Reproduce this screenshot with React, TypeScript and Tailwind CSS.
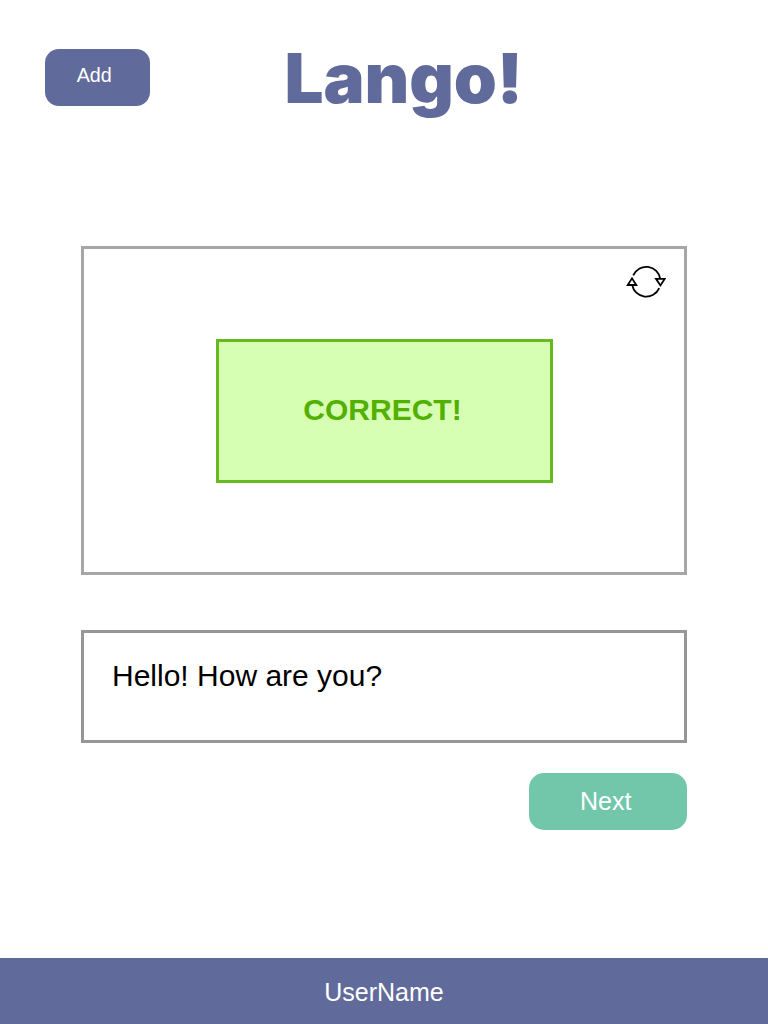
function SwapIcon() {
  return (
    <svg width="40" height="34" viewBox="0 0 40 34" fill="none" stroke="#000" strokeWidth="1.8">
      <path d="M7.2 10.4A14.2 14.2 0 0 1 34.3 14" />
      <path d="M33.2 23.2A14.2 14.2 0 0 1 6.2 19.8" />
      <path d="M30 13.8H38.8L34.4 20.4Z" />
      <path d="M1.7 20H10.3L6 13.3Z" />
    </svg>
  );
}

export default function App() {
  return (
    <div className="flex h-[1024px] w-[768px] flex-col bg-white font-['Liberation_Sans',Arial,sans-serif]">
      <header className="flex h-[246px] items-start pl-[45px] pt-[49px]">
        <button className="h-[57px] w-[104.5px] rounded-[14px] bg-[#616b9b] pb-1 pr-[6px] text-[19.7px] leading-[53px] text-white">
          Add
        </button>
        <h1 className="ml-[135px] -mt-[11px] whitespace-nowrap font-['Inter',sans-serif] text-[69px] font-black leading-[80px] tracking-[-0.1px] text-[#616b9b]">
          Lango!
        </h1>
      </header>

      <main className="flex flex-1 flex-col pl-[81px] pr-[81px]">
        <section className="flex h-[329px] w-[606px] flex-col border-[3px] border-[#a6a6a6]">
          <button className="ml-auto mr-[18px] mt-[16px] h-[34px] w-[40px]" aria-label="Swap">
            <SwapIcon />
          </button>
          <div className="ml-[132px] mt-[40px] h-[144px] w-[337px] border-[3px] border-[#66b91e] bg-[#d7ffb3] pr-[4px] text-center text-[30px] font-bold leading-[136px] text-[#51b000]">
            CORRECT!
          </div>
        </section>
        <section className="mt-[55px] h-[113px] w-[606px] border-[3px] border-[#969696] pl-[28px] pt-[25px] text-[30px] leading-[36px] text-black">
          Hello! How are you?
        </section>
        <button className="ml-auto mt-[30px] h-[57px] w-[158.5px] rounded-[15px] bg-[#72c7ab] pr-[4px] text-[25px] leading-[57px] text-white">
          Next
        </button>
      </main>

      <footer className="h-[66px] bg-[#616b9b] text-center text-[25px] leading-[69px] text-white">
        UserName
      </footer>
    </div>
  );
}
